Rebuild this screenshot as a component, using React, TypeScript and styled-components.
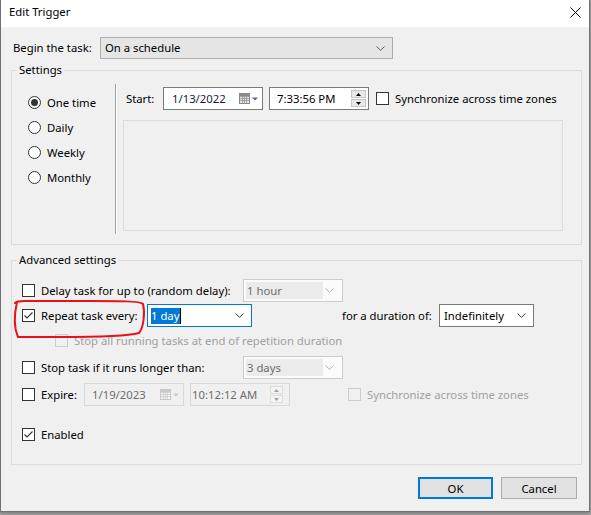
import React from "react";
import styled, { createGlobalStyle } from "styled-components";

const FS = "11.3px";

const Global = createGlobalStyle`
  html, body { margin: 0; padding: 0; }
  body {
    width: 591px; height: 515px; overflow: hidden;
    background: #a9a9a9;
    font-family: "Noto Sans", "Segoe UI", sans-serif;
    font-size: ${FS}; line-height: 16px; color: #000;
  }
`;

const Window = styled.div`
  position: relative;
  box-sizing: border-box;
  width: 590px; height: 512px;
  border: 1px solid #707070; border-top: none;
  display: flex; flex-direction: column;
  background: #f0f0f0;
  box-shadow: 0 2px 3px rgba(0,0,0,0.25);
`;

const TitleBar = styled.div`
  height: 27px; flex: none; background: #fff;
  display: flex; align-items: center; justify-content: space-between;
  padding: 0 8px 3px 8px; box-sizing: border-box;
`;

const Title = styled.span`
  font-size: ${FS};
`;

const Body = styled.div`
  flex: 1; display: flex; flex-direction: column;
  padding: 10px 0 0 10px;
`;

const TaskRow = styled.div`
  display: flex; align-items: center; height: 22px; padding-left: 2px;
`;

const FixedLabel = styled.span<{ $w: number; $pl?: number }>`
  width: ${p => p.$w}px; flex: none; padding-left: ${p => p.$pl ?? 0}px;
  white-space: nowrap; box-sizing: border-box;
`;

const Group = styled.fieldset<{ $mt: number }>`
  margin: ${p => p.$mt}px 0 0 0; padding: 0;
  width: 571px; box-sizing: border-box;
  border: 1px solid #dcdcdc;
  min-width: 0;
`;

const Legend = styled.legend`
  margin-left: 5px; padding: 0 2px; line-height: 16px; font-size: ${FS};
`;

const SettingsBody = styled.div`
  display: flex; align-items: flex-start; padding-bottom: 10px;
`;

const RadioColumn = styled.div`
  width: 103px; flex: none; box-sizing: border-box;
  padding: 12px 0 0 16px; display: flex; flex-direction: column;
`;

const RadioRow = styled.div`
  height: 25px; display: flex; align-items: center; gap: 6px;
`;

const RadioCircle = styled.span<{ $on?: boolean }>`
  width: 13px; height: 13px; box-sizing: border-box; flex: none;
  border: 1px solid #333; border-radius: 50%; background: #fff;
  display: flex; align-items: center; justify-content: center;
  &::after {
    content: ""; width: 7px; height: 7px; border-radius: 50%;
    background: ${p => (p.$on ? "#333" : "transparent")};
  }
`;

const Divider = styled.div`
  width: 1px; height: 150px; margin-top: 6px; flex: none;
  background: #a0a0a0; box-shadow: 1px 0 0 #fff;
`;

const RightPane = styled.div`
  flex: 1; padding: 9px 0 0 7px; display: flex; flex-direction: column;
`;

const StartRow = styled.div`
  height: 23px; display: flex; align-items: center;
`;

const InnerPanel = styled.div`
  margin-top: 10px; width: 440px; height: 111px; box-sizing: border-box;
  border: 1px solid #dcdcdc;
`;

const AdvBody = styled.div`
  padding: 11px 0 23px 10px; display: flex; flex-direction: column;
`;

const Row = styled.div<{ $mt?: number; $h?: number; $pl?: number }>`
  display: flex; align-items: center;
  height: ${p => p.$h ?? 23}px;
  margin-top: ${p => p.$mt ?? 0}px;
  padding-left: ${p => p.$pl ?? 0}px;
`;

const CheckLabel = styled.label<{ $w?: number; $dim?: boolean }>`
  display: flex; align-items: center; gap: 6px; flex: none;
  width: ${p => (p.$w ? `${p.$w}px` : "auto")};
  color: ${p => (p.$dim ? "#a0a0a0" : "#000")};
  white-space: nowrap;
`;

const CheckBox = styled.span<{ $disabled?: boolean }>`
  width: 13px; height: 13px; box-sizing: border-box; flex: none;
  border: 1px solid ${p => (p.$disabled ? "#cccccc" : "#333")};
  background: ${p => (p.$disabled ? "#f0f0f0" : "#fff")};
  display: flex; align-items: center; justify-content: center;
`;

const Check = ({ checked, disabled }: { checked?: boolean; disabled?: boolean }) => (
  <CheckBox $disabled={disabled}>
    {checked && (
      <svg width="11" height="11" viewBox="0 0 11 11">
        <path d="M1.5 5.5 L4 8 L9.5 2.5" fill="none" stroke="#333" strokeWidth="1.1" />
      </svg>
    )}
  </CheckBox>
);

type Variant = "button" | "disabled" | "focused" | "plain";

const ComboBox = styled.div<{ $w: number; $h?: number; $v: Variant }>`
  box-sizing: border-box; flex: none;
  width: ${p => p.$w}px; height: ${p => p.$h ?? 23}px;
  display: flex; align-items: center; justify-content: space-between;
  border: 1px solid ${p =>
    p.$v === "button" ? "#adadad" : p.$v === "disabled" ? "#cccccc" : p.$v === "focused" ? "#0078d7" : "#7a7a7a"};
  background: ${p => (p.$v === "button" ? "#e5e5e5" : p.$v === "disabled" ? "#fbfbfb" : "#fff")};
  padding: ${p => (p.$v === "disabled" ? "2px 8px 2px 2px" : p.$v === "focused" ? "0 7px 0 3px" : "0 7px 0 4px")};
  color: ${p => (p.$v === "disabled" ? "#6d6d6d" : "#000")};
`;

const DisabledField = styled.span`
  width: 76px; height: 17px; background: #ebebeb; display: flex; align-items: center; padding-left: 1px;
`;

const Selected = styled.span`
  background: #0078d7; color: #fff; height: 16px; padding: 0 1px 0 0;
  border-right: 1px solid #000;
  display: flex; align-items: center;
`;

const Chevron = ({ color = "#606060" }: { color?: string }) => (
  <svg width="9" height="5" viewBox="0 0 9 5">
    <path d="M0.5 0.5 L4.5 4.3 L8.5 0.5" fill="none" stroke={color} strokeWidth="1" />
  </svg>
);

const Picker = styled.div<{ $disabled?: boolean; $pl: number; $pr?: number }>`
  box-sizing: border-box; width: 100px; height: 23px; flex: none;
  border: 1px solid ${p => (p.$disabled ? "#d9d9d9" : "#7a7a7a")};
  background: ${p => (p.$disabled ? "#f0f0f0" : "#fff")};
  color: ${p => (p.$disabled ? "#6d6d6d" : "#000")};
  display: flex; align-items: center; justify-content: space-between;
  padding: 0 ${p => p.$pr ?? 2}px 0 ${p => p.$pl}px;
`;

const CalendarIcon = ({ disabled }: { disabled?: boolean }) => {
  const c = disabled ? "#c8c8c8" : "#8a8a8a";
  const t = disabled ? "#c8c8c8" : "#53698f";
  return (
    <svg width="21" height="12" viewBox="0 0 21 12">
      <rect x="0.5" y="0.5" width="10" height="10" fill={disabled ? "#f4f4f4" : "#e8e8e8"} stroke={c} />
      <path d="M0.5 3.5 H10.5 M0.5 5.5 H10.5 M0.5 7.5 H10.5 M3.5 3 V10.5 M5.5 3 V10.5 M7.5 3 V10.5" stroke={c} strokeWidth="0.7" />
      <rect x="1" y="1" width="9" height="2" fill={c} />
      <path d="M13 4.5 H19 L16 7.5 Z" fill={t} />
    </svg>
  );
};

const SpinColumn = styled.div`
  display: flex; flex-direction: column; gap: 1px;
`;

const SpinBtn = styled.span<{ $disabled?: boolean }>`
  width: ${p => (p.$disabled ? 13 : 15)}px; height: 8px; box-sizing: border-box;
  border: 1px solid ${p => (p.$disabled ? "#dcdcdc" : "#c4c4c4")};
  background: ${p => (p.$disabled ? "#f4f4f4" : "#e8e8e8")};
  display: flex; align-items: center; justify-content: center;
`;

const Spin = ({ disabled }: { disabled?: boolean }) => {
  const c = disabled ? "#a0a0a0" : "#000";
  return (
    <SpinColumn>
      <SpinBtn $disabled={disabled}>
        <svg width="5" height="3" viewBox="0 0 5 3"><path d="M0 3 H5 L2.5 0 Z" fill={c} /></svg>
      </SpinBtn>
      <SpinBtn $disabled={disabled}>
        <svg width="5" height="3" viewBox="0 0 5 3"><path d="M0 0 H5 L2.5 3 Z" fill={c} /></svg>
      </SpinBtn>
    </SpinColumn>
  );
};

const Footer = styled.div`
  width: 571px; display: flex; justify-content: flex-end; gap: 8px;
  margin-top: 12px; padding-right: 5px; box-sizing: border-box;
`;

const Button = styled.button<{ $default?: boolean; $w: number }>`
  box-sizing: border-box; width: ${p => p.$w}px; height: 22px;
  font-family: inherit; font-size: ${FS}; color: #000; padding: 0;
  background: #e1e1e1;
  border: ${p => (p.$default ? "2px solid #0078d7" : "1px solid #adadad")};
`;

const Annotation = styled.svg`
  position: absolute; left: -1px; top: 0; pointer-events: none;
`;

const CloseIcon = () => (
  <svg width="11" height="11" viewBox="0 0 11 11">
    <path d="M0.5 0.5 L10.5 10.5 M10.5 0.5 L0.5 10.5" stroke="#000" strokeWidth="1" />
  </svg>
);

export default function App() {
  return (
    <>
      <Global />
      <Window>
        <TitleBar>
          <Title>Edit Trigger</Title>
          <CloseIcon />
        </TitleBar>
        <Body>
          <TaskRow>
            <FixedLabel $w={87}>Begin the task:</FixedLabel>
            <ComboBox $w={293} $h={22} $v="button">
              <span>On a schedule</span>
              <Chevron />
            </ComboBox>
          </TaskRow>

          <Group $mt={3}>
            <Legend>Settings</Legend>
            <SettingsBody>
              <RadioColumn>
                <RadioRow><RadioCircle $on />One time</RadioRow>
                <RadioRow><RadioCircle />Daily</RadioRow>
                <RadioRow><RadioCircle />Weekly</RadioRow>
                <RadioRow><RadioCircle />Monthly</RadioRow>
              </RadioColumn>
              <Divider />
              <RightPane>
                <StartRow>
                  <FixedLabel $w={40} $pl={3}>Start:</FixedLabel>
                  <Picker $pl={8}>
                    <span style={{ color: "#1a1a40" }}>1/13/2022</span>
                    <CalendarIcon />
                  </Picker>
                  <Picker $pl={7} style={{ marginLeft: 6 }}>
                    <span>7:33:56 PM</span>
                    <Spin />
                  </Picker>
                  <CheckLabel style={{ marginLeft: 7 }}>
                    <Check />
                    Synchronize across time zones
                  </CheckLabel>
                </StartRow>
                <InnerPanel />
              </RightPane>
            </SettingsBody>
          </Group>

          <Group $mt={7}>
            <Legend>Advanced settings</Legend>
            <AdvBody>
              <Row>
                <CheckLabel $w={221}><Check />Delay task for up to (random delay):</CheckLabel>
                <ComboBox $w={100} $v="disabled">
                  <DisabledField>1 hour</DisabledField>
                  <Chevron color="#b0b0b0" />
                </ComboBox>
              </Row>
              <Row $mt={2}>
                <CheckLabel $w={125}><Check checked />Repeat task every:</CheckLabel>
                <ComboBox $w={105} $v="focused">
                  <Selected>1 day</Selected>
                  <Chevron color="#333" />
                </ComboBox>
                <FixedLabel $w={97} style={{ marginLeft: 90 }}>for a duration of:</FixedLabel>
                <ComboBox $w={95} $v="plain">
                  <span>Indefinitely</span>
                  <Chevron color="#333" />
                </ComboBox>
              </Row>
              <Row $mt={7} $h={13} $pl={33}>
                <CheckLabel $dim><Check disabled />Stop all running tasks at end of repetition duration</CheckLabel>
              </Row>
              <Row $mt={9}>
                <CheckLabel $w={221}><Check />Stop task if it runs longer than:</CheckLabel>
                <ComboBox $w={100} $v="disabled">
                  <DisabledField>3 days</DisabledField>
                  <Chevron color="#b0b0b0" />
                </ComboBox>
              </Row>
              <Row $mt={4}>
                <CheckLabel $w={62}><Check />Expire:</CheckLabel>
                <Picker $disabled $pl={7}>
                  <span>1/19/2023</span>
                  <CalendarIcon disabled />
                </Picker>
                <Picker $disabled $pl={1} $pr={6} style={{ marginLeft: 6 }}>
                  <span>10:12:12 AM</span>
                  <Spin disabled />
                </Picker>
                <CheckLabel $dim style={{ marginLeft: 58 }}>
                  <Check disabled />
                  Synchronize across time zones
                </CheckLabel>
              </Row>
              <Row $mt={22} $h={13}>
                <CheckLabel><Check checked />Enabled</CheckLabel>
              </Row>
            </AdvBody>
          </Group>

          <Footer>
            <Button $default $w={75}>OK</Button>
            <Button $w={76}>Cancel</Button>
          </Footer>
        </Body>
        <Annotation width="591" height="515" viewBox="0 0 591 515">
          <path
            d="M17 302 C14 315, 14 328, 18 337 L60 337 C100 337, 128 336, 139 333 C144 327, 145 312, 143 304 C140 301, 120 301, 90 301 L30 301 C23 301, 18 300, 15 303"
            fill="none" stroke="#e8101a" strokeWidth="2" strokeLinecap="round"
          />
        </Annotation>
      </Window>
    </>
  );
}
